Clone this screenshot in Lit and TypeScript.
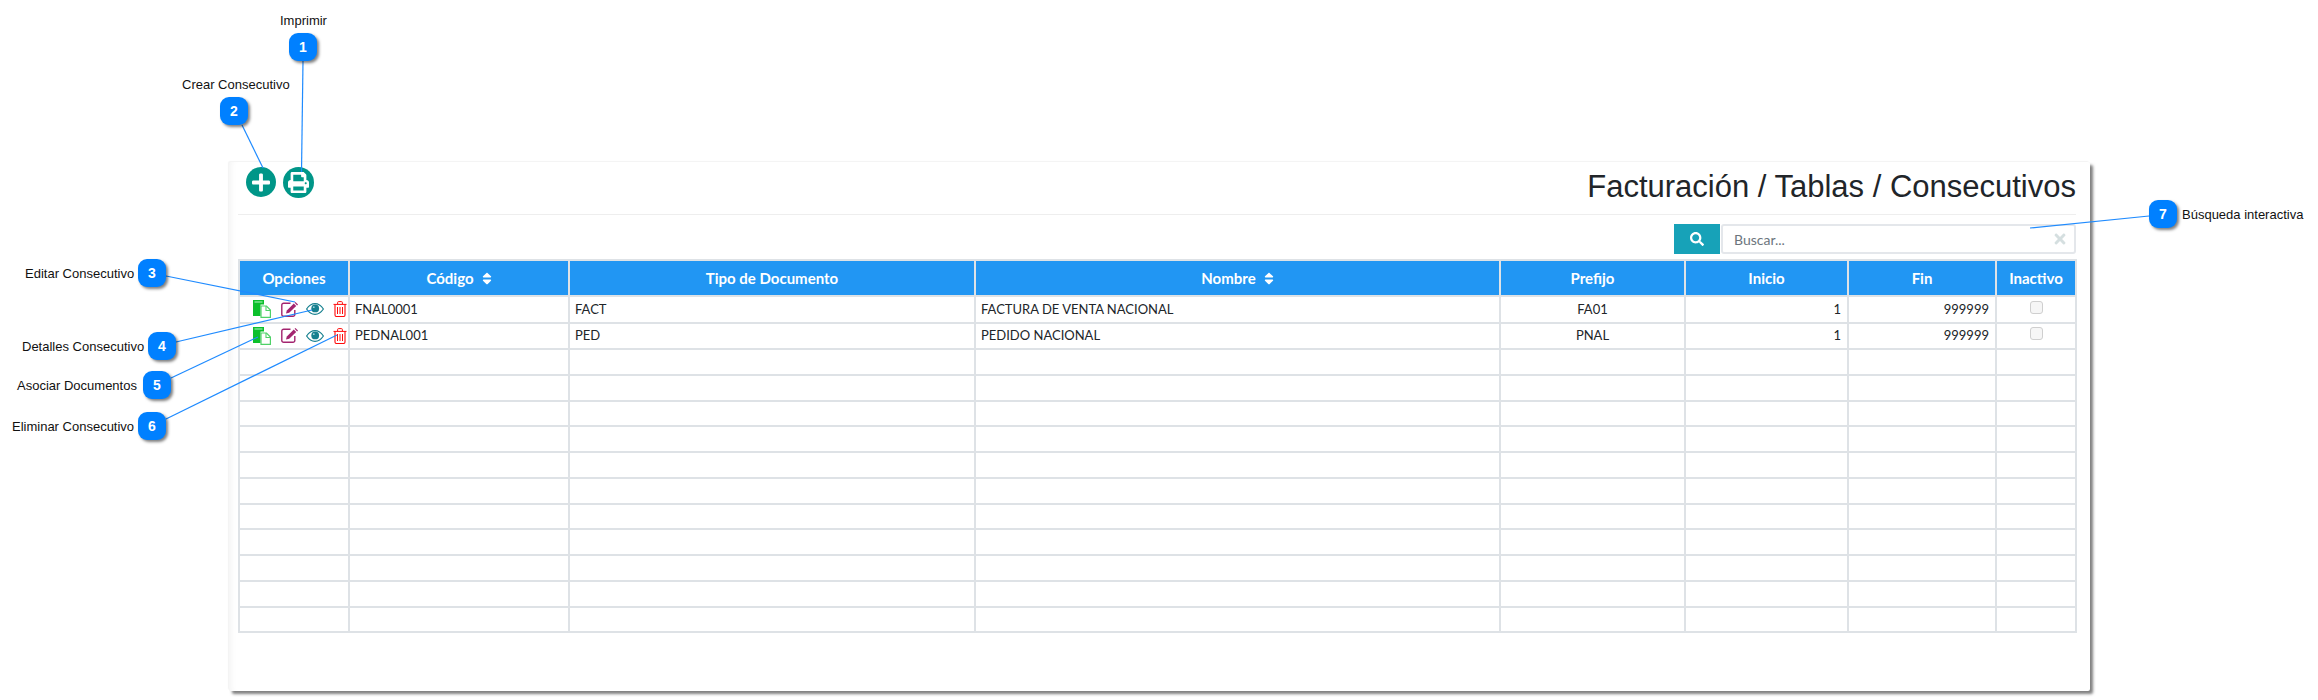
import { LitElement, html, css, svg } from "lit";
import { customElement } from "lit/decorators.js";

const CALLOUTS = [
  { n: 1, x: 289, y: 33, label: "Imprimir", lx: 280, ly: 21 },
  { n: 2, x: 220, y: 97, label: "Crear Consecutivo", lx: 182, ly: 85 },
  { n: 3, x: 138, y: 259, label: "Editar Consecutivo", lx: 25, ly: 274 },
  { n: 4, x: 148, y: 332, label: "Detalles Consecutivo", lx: 22, ly: 347 },
  { n: 5, x: 143, y: 371, label: "Asociar Documentos", lx: 17, ly: 386 },
  { n: 6, x: 138, y: 412, label: "Eliminar Consecutivo", lx: 12, ly: 427 },
  { n: 7, x: 2149, y: 200, label: "Búsqueda interactiva", lx: 2182, ly: 215 },
];

const LINES = [
  [303, 61, 301.5, 172],
  [242, 125, 263, 168],
  [166, 276, 295, 302],
  [176, 342, 312, 310],
  [171, 378, 258, 337],
  [166, 419, 337, 335],
  [2149, 216, 2030, 228],
];

const COLS = [
  { t: "Opciones", w: 110 },
  { t: "Código", w: 220, sort: true },
  { t: "Tipo de Documento", w: 406 },
  { t: "Nombre", w: 525, sort: true },
  { t: "Prefijo", w: 185 },
  { t: "Inicio", w: 163 },
  { t: "Fin", w: 148 },
  { t: "Inactivo", w: 80 },
];

const ROWS = [
  ["FNAL0001", "FACT", "FACTURA DE VENTA NACIONAL", "FA01", "1", "999999"],
  ["PEDNAL001", "PED", "PEDIDO NACIONAL", "PNAL", "1", "999999"],
];

const copyIcon = html`<svg class="ic-copy" viewBox="0 0 18 18">
  <path d="M0 0h11v4.500H7.500V16H0z" fill="#0cc02c"/>
  <path d="M1.500 2h8" stroke="#b8f0c4" stroke-width="1"/>
  <path d="M8 6h5.500L17.400 10v7.400H8z" fill="#fff" stroke="#4fd168" stroke-width="1.200"/>
  <path d="M13 6v4.500h4.400" fill="none" stroke="#4fd168" stroke-width="1.100"/>
</svg>`;

const editIcon = html`<svg class="ic-edit" viewBox="0 0 18 15">
  <path d="M9.500 1.200H2.600A1.800 1.800 0 0 0 .8 3v9.400a1.800 1.800 0 0 0 1.800 1.800H12a1.800 1.800 0 0 0 1.800-1.800V8" fill="none" stroke="#a3246f" stroke-width="1.400"/>
  <path d="M5 11.500l.8-3L12.800 1.500l2.400 2.400L8.200 10.800z" fill="#a3246f"/>
  <path d="M13.600.7l.8-.6 2.600 2.500-.9.9z" fill="#a3246f"/>
</svg>`;

const eyeIcon = html`<svg class="ic-eye" viewBox="0 0 18 12">
  <path d="M.6 6C3 2.400 5.800.7 9 .7s6 1.700 8.400 5.300C15 9.600 12.200 11.300 9 11.300S3 9.600.6 6z" fill="#fff" stroke="#17808f" stroke-width="1.200"/>
  <circle cx="9.200" cy="5.400" r="3.900" fill="#17808f"/>
  <circle cx="7.800" cy="4.200" r="0.9" fill="#9fd3da"/>
</svg>`;

const trashIcon = html`<svg class="ic-trash" viewBox="0 0 14 16">
  <path d="M.5 3.400h13M4.600 3.200V1.600q0-1 1-1h2.800q1 0 1 1v1.600" fill="none" stroke="#ff0a0a" stroke-width="1"/>
  <path d="M2 3.500v10.600q0 1.400 1.400 1.400h7.200q1.400 0 1.400-1.400V3.500" fill="none" stroke="#ff0a0a" stroke-width="1.100"/>
  <path d="M4.500 6v7M7 6v7M9.500 6v7" stroke="#ff0a0a" stroke-width="1"/>
</svg>`;

const sortIcon = html`<svg class="sort" viewBox="0 0 320 512"><path fill="#fff" d="M41 288h238c21.400 0 32.100 25.900 17 41L177 448c-9.400 9.400-24.600 9.400-33.900 0L24 329c-15.100-15.100-4.400-41 17-41zm255-105L177 64c-9.400-9.400-24.600-9.400-33.900 0L24 183c-15.100 15.100-4.400 41 17 41h238c21.400 0 32.100-25.900 17-41z"/></svg>`;

@customElement("app-root")
export class AppRoot extends LitElement {
  static styles = css`
    :host {
      display: block;
      position: relative;
      width: 2318px;
      height: 700px;
      overflow: hidden;
      background: #fff;
      font-family: "Lato", sans-serif;
      color: #212529;
    }
    .page {
      padding: 162px 0 0 229px;
    }
    .card {
      box-sizing: border-box;
      width: 1861px;
      height: 529px;
      padding: 0 14px 0 9px;
      background: #fff;
      border-radius: 2px;
      box-shadow: 3px 3px 3px rgba(0, 0, 0, 0.5), -1px -1px 1px rgba(0, 0, 0, 0.05),
        inset 7px 0 6px -5px rgba(0, 0, 0, 0.05);
    }
    .toolbar {
      box-sizing: border-box;
      display: flex;
      align-items: flex-start;
      justify-content: space-between;
      height: 53px;
      padding: 5px 0 0 8px;
      border-bottom: 1px solid #eee;
    }
    .tools {
      display: flex;
      gap: 7px;
    }
    .round {
      display: flex;
      align-items: center;
      justify-content: center;
      width: 30px;
      height: 30px;
      border-radius: 50%;
      background: #009688;
    }
    .round.print {
      width: 31px;
      height: 31px;
    }
    .plus-icon {
      width: 18px;
      height: 21px;
    }
    .print-icon {
      width: 21px;
      height: 21px;
    }
    h1 {
      margin: 2px 0 0;
      font: 400 31px/36px "Liberation Sans", sans-serif;
      color: #212529;
    }
    .search {
      display: flex;
      justify-content: flex-end;
      margin-top: 9px;
    }
    .search-btn {
      display: flex;
      align-items: center;
      justify-content: center;
      width: 46px;
      height: 30px;
      background: #17a2b8;
    }
    .search-btn svg {
      width: 14px;
      height: 14px;
    }
    .search-box {
      box-sizing: border-box;
      display: flex;
      align-items: center;
      justify-content: space-between;
      width: 355px;
      height: 30px;
      margin-left: 1px;
      padding: 0 8px 0 11px;
      border: 2px solid #e4e7eb;
      border-radius: 3px;
      font-size: 14px;
      color: #6c757d;
    }
    .search-box svg {
      width: 12px;
      height: 16px;
    }
    table {
      table-layout: fixed;
      width: 1837px;
      margin-top: 5px;
      border-collapse: collapse;
      font-size: 13px;
    }
    th,
    td {
      border: 2px solid #dee2e6;
      padding: 0 5px;
    }
    th {
      height: 34px;
      background: #2196f3;
      color: #fff;
      font-size: 15px;
      font-weight: 700;
      text-align: center;
    }
    td {
      height: 23.770px;
      line-height: 1;
      white-space: nowrap;
    }
    tr.data td {
      height: 24.500px;
    }
    td.c {
      text-align: center;
    }
    td.r {
      text-align: right;
      padding-right: 6px;
    }
    td.o {
      padding: 0;
    }
    .sort {
      width: 10px;
      height: 15px;
      margin-left: 8px;
      vertical-align: -2px;
    }
    .opts {
      display: flex;
      align-items: center;
      padding-left: 13px;
    }
    .opts svg {
      flex: none;
    }
    .ic-copy {
      width: 18px;
      height: 18px;
    }
    .ic-edit {
      width: 18px;
      height: 15px;
      margin-left: 10px;
    }
    .ic-eye {
      width: 18px;
      height: 12px;
      margin-left: 7px;
    }
    .ic-trash {
      width: 14px;
      height: 16px;
      margin-left: 9px;
    }
    .check {
      appearance: none;
      display: block;
      box-sizing: border-box;
      width: 13px;
      height: 13px;
      margin: 0 auto 4px;
      border: 1px solid #cfcfcf;
      border-radius: 3px;
      background: #f6f6f6;
    }
    .lines {
      position: absolute;
      left: 0;
      top: 0;
      width: 2318px;
      height: 700px;
      pointer-events: none;
    }
    .badge {
      position: absolute;
      display: flex;
      align-items: center;
      justify-content: center;
      width: 28px;
      height: 28px;
      border-radius: 9px;
      background: #0080ff;
      color: #fff;
      font: 700 14px "Liberation Sans", sans-serif;
      box-shadow: 2px 2px 3px rgba(0, 0, 0, 0.5);
    }
    .label {
      position: absolute;
      font: 400 13px/16px "Liberation Sans", sans-serif;
      color: #111;
      white-space: nowrap;
    }
  `;

  render() {
    return html`
      <div class="page">
        <div class="card">
          <div class="toolbar">
            <div class="tools">
              <div class="round">
                <svg class="plus-icon" viewBox="0 0 448 512"><path fill="#fff" d="M416 208H272V64c0-17.670-14.330-32-32-32h-32c-17.670 0-32 14.330-32 32v144H32c-17.670 0-32 14.330-32 32v32c0 17.670 14.330 32 32 32h144v144c0 17.670 14.330 32 32 32h32c17.670 0 32-14.330 32-32V304h144c17.670 0 32-14.330 32-32v-32c0-17.670-14.330-32-32-32z"/></svg>
              </div>
              <div class="round print">
                <svg class="print-icon" viewBox="0 0 512 512"><path fill="#fff" d="M448 192V77.250c0-8.490-3.370-16.620-9.370-22.630L393.370 9.370c-6-6-14.140-9.370-22.630-9.370H96C78.330 0 64 14.330 64 32v160c-35.350 0-64 28.650-64 64v112c0 8.840 7.160 16 16 16h48v96c0 17.670 14.330 32 32 32h320c17.670 0 32-14.330 32-32v-96h48c8.840 0 16-7.160 16-16V256c0-35.350-28.650-64-64-64zm-64 256H128v-96h256v96zm0-224H128V64h192v48c0 8.840 7.160 16 16 16h48v96zm48 72c-13.250 0-24-10.750-24-24 0-13.260 10.750-24 24-24s24 10.740 24 24c0 13.250-10.750 24-24 24z"/></svg>
              </div>
            </div>
            <h1>Facturación / Tablas / Consecutivos</h1>
          </div>
          <div class="search">
            <div class="search-btn">
              <svg viewBox="0 0 512 512"><path fill="#fff" d="M505 442.700L405.300 343c-4.500-4.500-10.600-7-17-7H372c27.600-35.300 44-79.700 44-128C416 93.100 322.900 0 208 0S0 93.100 0 208s93.100 208 208 208c48.300 0 92.700-16.400 128-44v16.300c0 6.400 2.500 12.500 7 17l99.700 99.700c9.400 9.400 24.600 9.400 33.900 0l28.300-28.300c9.400-9.400 9.400-24.600.1-34zM208 336c-70.700 0-128-57.200-128-128 0-70.700 57.200-128 128-128 70.700 0 128 57.200 128 128 0 70.700-57.200 128-128 128z"/></svg>
            </div>
            <div class="search-box">
              <span>Buscar...</span>
              <svg viewBox="0 0 352 512"><path fill="#d5dfe0" d="M242.720 256l100.070-100.070c12.280-12.280 12.280-32.190 0-44.480l-22.240-22.240c-12.280-12.280-32.190-12.280-44.480 0L176 189.280 75.930 89.210c-12.280-12.280-32.190-12.280-44.480 0L9.210 111.450c-12.280 12.280-12.280 32.190 0 44.480L109.280 256 9.210 356.070c-12.280 12.280-12.280 32.190 0 44.480l22.240 22.240c12.280 12.280 32.200 12.280 44.480 0L176 322.720l100.070 100.070c12.280 12.280 32.200 12.280 44.480 0l22.240-22.240c12.280-12.280 12.280-32.190 0-44.480L242.720 256z"/></svg>
            </div>
          </div>
          <table>
            <colgroup>${COLS.map((c) => html`<col style="width:${c.w}px" />`)}</colgroup>
            <thead>
              <tr>${COLS.map((c) => html`<th>${c.t}${c.sort ? sortIcon : ""}</th>`)}</tr>
            </thead>
            <tbody>
              ${ROWS.map(
                (r) => html`<tr class="data">
                  <td class="o"><div class="opts">${copyIcon}${editIcon}${eyeIcon}${trashIcon}</div></td>
                  <td>${r[0]}</td>
                  <td>${r[1]}</td>
                  <td>${r[2]}</td>
                  <td class="c">${r[3]}</td>
                  <td class="r">${r[4]}</td>
                  <td class="r">${r[5]}</td>
                  <td><input class="check" type="checkbox" disabled /></td>
                </tr>`
              )}
              ${Array.from({ length: 11 }).map(
                () => html`<tr>${COLS.map(() => html`<td></td>`)}</tr>`
              )}
            </tbody>
          </table>
        </div>
      </div>
      <svg class="lines" viewBox="0 0 2318 700">
        ${LINES.map(
          (l) => svg`<line x1=${l[0]} y1=${l[1]} x2=${l[2]} y2=${l[3]} stroke="#1f8bff" stroke-width="1.200" />`
        )}
      </svg>
      ${CALLOUTS.map(
        (c) => html`
          <div class="badge" style="left:${c.x}px;top:${c.y}px">${c.n}</div>
          <div class="label" style="left:${c.lx}px;top:${c.ly - 8}px">${c.label}</div>
        `
      )}
    `;
  }
}
